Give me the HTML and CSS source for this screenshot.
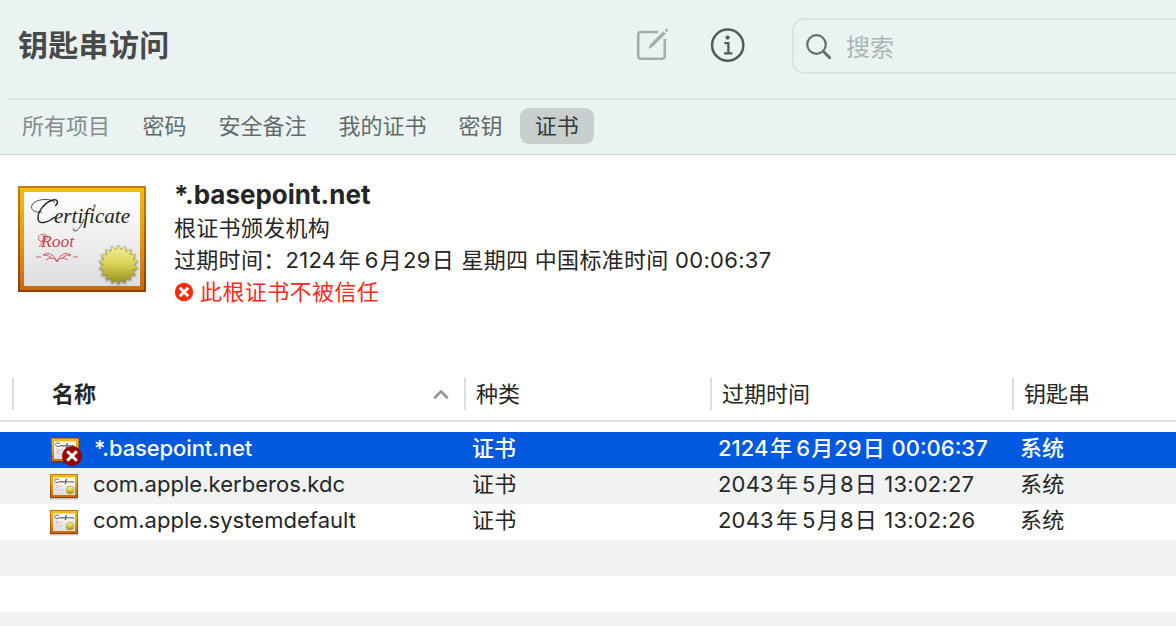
FILE: index.html
```html
<!DOCTYPE html>
<html lang="zh-CN">
<head>
<meta charset="utf-8">
<title>钥匙串访问</title>
<link rel="stylesheet" href="styles.css">
</head>
<body>
<svg class="defs" width="0" height="0" aria-hidden="true">
  <defs>
    <linearGradient id="frame" x1="0" y1="0" x2="0" y2="1"><stop offset="0" stop-color="#efc00f"/><stop offset=".5" stop-color="#e29b12"/><stop offset="1" stop-color="#c8690f"/></linearGradient>
    <linearGradient id="edge" x1="0" y1="0" x2="0" y2="1"><stop offset="0" stop-color="#c97a08"/><stop offset="1" stop-color="#8c3f08"/></linearGradient>
    <linearGradient id="paper" x1="0" y1="0" x2="0" y2="1"><stop offset="0" stop-color="#fff"/><stop offset="1" stop-color="#dedede"/></linearGradient>
    <linearGradient id="gold" x1="0" y1="0" x2="0" y2="1"><stop offset="0" stop-color="#f4f0a0"/><stop offset=".45" stop-color="#dcd65a"/><stop offset="1" stop-color="#958913"/></linearGradient>
    <symbol id="mini" viewBox="0 0 28 26">
      <rect y="1" width="28" height="24.5" fill="#000" opacity=".2"/>
      <rect width="28" height="24" fill="url(#edge)"/>
      <rect x="1" y="1" width="26" height="22" fill="url(#frame)"/>
      <rect x="3" y="3.5" width="22" height="17.5" fill="url(#paper)"/>
      <path d="M9 5.500C6 4.500 3.500 5 5 7.500c1 1.500 3 1.500 4.500 0M8.500 8.500l1.500-1.500 1 1.500 1-1.500 1 1.500 1-1.500 1 1L16.500 5l-1.500 5 2.500-3 1 1.500 1-1.500 1.500 1.500 1-1.500 1 1.500 1-.5" fill="none" stroke="#555" stroke-width=".9"/>
      <path d="M5 11l3 .5-2 2 3-.5 2-1.500 1 1.500M4.500 14.500l3 1 1.500 1.500 2-1.500 2-.5" fill="none" stroke="#e6aaaa" stroke-width=".8"/>
      <circle cx="20" cy="16" r="4" fill="url(#gold)" stroke="#aaa02f" stroke-width=".7"/>
    </symbol>
  </defs>
</svg>
<header class="toolbar">
  <div class="titlebar">
    <h1 class="title">钥匙串访问</h1>
    <svg class="compose" width="36" height="36" viewBox="0 0 36 36" fill="none">
      <path d="M24 5H7Q4.200 5 4.200 7.800v21Q4.200 31.800 7 31.800h21q2.800 0 2.800-2.800V12" stroke="#a5adac" stroke-width="2.600"/>
      <path d="M14.300 21.900l2-4.700L29.400 4.300l2.400 2.400L18.900 19.500z" fill="#a5adac"/>
      <path d="M30.700 3.300l1.300-1.300q.9-.6 1.700.2.800.8.200 1.700l-1.300 1.300z" fill="#a5adac"/>
    </svg>
    <svg class="info" width="36" height="36" viewBox="0 0 36 36" fill="none" stroke="#535b5a">
      <circle cx="17.700" cy="18.200" r="15.600" stroke-width="2.500"/>
      <circle cx="17.600" cy="10.600" r="2.100" fill="#535b5a" stroke="none"/>
      <path d="M14.500 16.200h3.900v10M14 26.300h8.400" stroke-width="2.300"/>
    </svg>
    <div class="search">
      <svg width="28" height="28" viewBox="0 0 28 28" fill="none" stroke="#686e6d"><circle cx="11.500" cy="11.500" r="9.300" stroke-width="2.200"/><path d="M18.300 18.300l6.300 6.300" stroke-width="2.900" stroke-linecap="round"/></svg>
      <span>搜索</span>
    </div>
  </div>
  <nav class="tabs">
    <span class="tab all">所有项目</span><span class="tab">密码</span><span class="tab">安全备注</span><span class="tab">我的证书</span><span class="tab">密钥</span><span class="tab active">证书</span>
  </nav>
</header>
<section class="detail">
  <svg class="certificate" width="128" height="108" viewBox="0 0 128 108">
    <rect y="0" width="128" height="106" fill="url(#edge)"/>
    <rect x="2" y="2" width="124" height="102" fill="url(#frame)"/>
    <rect x="6" y="6" width="116" height="94" fill="url(#paper)"/>
    <g fill="none" stroke="#222">
      <path d="M37 17C33 11 17 13 14 19c-2 5 3 8 10 7" stroke-width=".8"/>
      <path d="M37 20c4-3 3-7-2-6-8 2-16 12-15 19 1 6 9 4 17-2" stroke-width="1.400"/>
      <path d="M66 33c-3 7-6 12-9 12-2 0-2-2-1-3M75 24c3-4 3-7 0-4" stroke-width=".8"/>
    </g>
    <text class="script" x="36" y="37" textLength="76" lengthAdjust="spacingAndGlyphs">ertificate</text>
    <path d="M30 51c-4-6-12-1-9 3 2 3 7 1 9-3M26 49c-1 5-2 9-5 12" fill="none" stroke="#ca4148" stroke-width=".8"/>
    <text class="root" x="23" y="61" textLength="33" lengthAdjust="spacingAndGlyphs">Root</text>
    <path d="M18 70q2 2 5 1M60 70q-2 2-5 1M25 69q8-5 14 6 6-11 14-6M28 74q7-5 11 2 4-7 11-2M25 69q7 0 9 4M53 69q-7 0-9 4" fill="none" stroke="#cf4c50" stroke-width=".9"/>
    <path class="seal" fill="url(#gold)" stroke="#9f982f" stroke-width=".5" d="M100.500 59l2.500 4.800 4.100-3.600.8 5.400 5.100-2.200-1 5.400 5.600-.3-2.700 4.800 5 2-4.300 3.500 4.300 3.400-5 2 2.700 4.800-5.600-.3 1 5.400-5.100-2.200-.8 5.400-4.100-3.600-2.500 4.800-2.500-4.800-4.100 3.600-.8-5.400-5.100 2.200 1-5.400-5.600.3 2.700-4.800-5-2 4.300-3.400-4.300-3.500 5-2-2.700-4.800 5.600.3-1-5.400 5.100 2.200.8-5.400 4.100 3.600z"/>
  </svg>
  <div class="summary">
    <h2>*.basepoint.net</h2>
    <p>根证书颁发机构</p>
    <p class="expiry">过期时间：<span class="num">2124</span><span class="year">年</span>6<span class="month">月</span>29<span class="day">日</span> 星期四 中国标准时间 <span class="time">00:06:37</span></p>
    <p class="warning"><svg width="20" height="20" viewBox="0 0 20 20"><circle cx="10" cy="10" r="9.200" fill="#fb2b0d"/><path d="M5.800 5.800l8.400 8.400m0-8.400l-8.400 8.400" stroke="#fff" stroke-width="3"/></svg>此根证书不被信任</p>
  </div>
</section>
<main class="table">
  <div class="head">
    <div class="name"><b>名称</b><svg width="16" height="12" viewBox="0 0 16 12"><path d="M2 9.500l6-6.200 6 6.200" fill="none" stroke="#959696" stroke-width="2.600" stroke-linecap="round" stroke-linejoin="round"/></svg></div>
    <div>种类</div><div>过期时间</div><div>钥匙串</div>
  </div>
  <div class="rows">
    <div class="row selected">
      <div class="item"><span class="badged"><svg width="28" height="26"><use href="#mini"/></svg><svg class="badge" width="20" height="20" viewBox="0 0 20 20"><circle cx="10" cy="10" r="10" fill="#970303"/><path d="M5.200 5.200l9.600 9.600m0-9.600l-9.600 9.600" stroke="#fff" stroke-width="3"/></svg></span><span class="host">*.basepoint.net</span></div>
      <div>证书</div><div class="date"><span class="num">2124</span><span class="year">年</span>6<span class="month">月</span>29<span class="day">日</span> <span class="time">00:06:37</span></div><div>系统</div>
    </div>
    <div class="row">
      <div class="item"><svg width="28" height="26"><use href="#mini"/></svg><span class="host">com.apple.kerberos.kdc</span></div>
      <div>证书</div><div class="date"><span class="num">2043</span><span class="year">年</span>5<span class="month">月</span>8<span class="day">日</span> <span class="time">13:02:27</span></div><div>系统</div>
    </div>
    <div class="row">
      <div class="item"><svg width="28" height="26"><use href="#mini"/></svg><span class="host">com.apple.systemdefault</span></div>
      <div>证书</div><div class="date"><span class="num">2043</span><span class="year">年</span>5<span class="month">月</span>8<span class="day">日</span> <span class="time">13:02:26</span></div><div>系统</div>
    </div>
    <div class="row"></div><div class="row"></div><div class="row"></div>
  </div>
</main>
</body>
</html>
```
FILE: styles.css
```css
* { box-sizing: border-box; }
body {
  margin: 0;
  width: 1176px;
  height: 626px;
  overflow: hidden;
  background: #fff;
  color: #262626;
  font: 22px/32px Inter, "Noto Sans CJK SC", sans-serif;
}
h1, h2, p { margin: 0; }
svg { display: block; flex: none; }
.defs { position: absolute; }
.toolbar { height: 155px; background: #eaf3f2; border-bottom: 1px solid #cdd0d0; }
.titlebar { height: 100px; margin-left: 8px; border-bottom: 2px solid #dbe4e2; display: flex; align-items: flex-start; }
.title { flex: none; width: 626px; padding: 25px 0 0 10px; font-size: 30px; line-height: 40px; letter-spacing: .3px; color: #484a4a; }
.compose { margin-top: 27px; }
.info { margin: 27px 0 0 40px; }
.search {
  width: 420px; height: 56px; margin: 18px 0 0 46px; padding-left: 11px;
  flex: none; border: 2px solid #dbe4e2; border-radius: 12px;
  display: flex; align-items: center; gap: 13px;
  color: #aeb5b4; font-size: 24px;
}
.search svg { margin-top: 2px; }
.search span { padding-top: 4px; }
.tabs { height: 54px; padding: 8px 0 0 6px; display: flex; }
.tab { height: 36px; padding: 0 16px; line-height: 36px; color: #636b6a; }
.tab.all { color: #858b8a; margin-right: .4px; }
.tab.active { margin-left: 1.2px; padding: 0 15px; border-radius: 9px; background: #c8cfce; color: #363a3a; }
.detail { height: 223px; padding: 31px 0 0 18px; display: flex; align-items: flex-start; gap: 28px; }
.certificate { overflow: visible; }
.script { font: italic 22px "Liberation Serif", serif; fill: #222; }
.root { font: italic 17px "Liberation Serif", serif; fill: #ca4148; }
.seal { filter: drop-shadow(0 1px 1px #777); }
.summary { margin-top: -7px; white-space: nowrap; letter-spacing: .3px; }
.summary h2 { height: 33px; font-size: 26px; line-height: 32px; font-weight: 700; letter-spacing: 0; }
.summary p { height: 32px; }
.year { padding: 0 4px 0 2px; }
.month { padding: 0 1px; }
.day { padding: 0 1px; }
.warning { display: flex; align-items: center; gap: 6px; color: #ff291d; letter-spacing: .4px; }
.head { height: 44px; padding-left: 12px; border-bottom: 2px solid #dedede; display: grid; grid-template-columns: 452px 246px 302px 1fr; }
.head > div { height: 32px; border-left: 2px solid #dedede; padding-left: 10px; }
.head .name { padding: 0 15px 0 38px; display: flex; align-items: center; justify-content: space-between; }
.rows { padding-top: 10px; }
.row { height: 36px; padding-left: 50px; display: grid; grid-template-columns: 422px 246px 302px 1fr; line-height: 32px; white-space: nowrap; letter-spacing: .2px; }
.row:nth-child(even) { background: #f1f3f3; }
.row.selected { background: #0059de; color: #fff; font-weight: 500; letter-spacing: 0; }
.item { display: flex; align-items: flex-start; gap: 15px; }
.item svg { margin-top: 6px; }
.badged { position: relative; margin: 0 0 0 1px; }
.badged .badge { position: absolute; left: 11px; top: 8px; }
.host { letter-spacing: .04px; }
.selected .host { letter-spacing: -.1px; }
```
